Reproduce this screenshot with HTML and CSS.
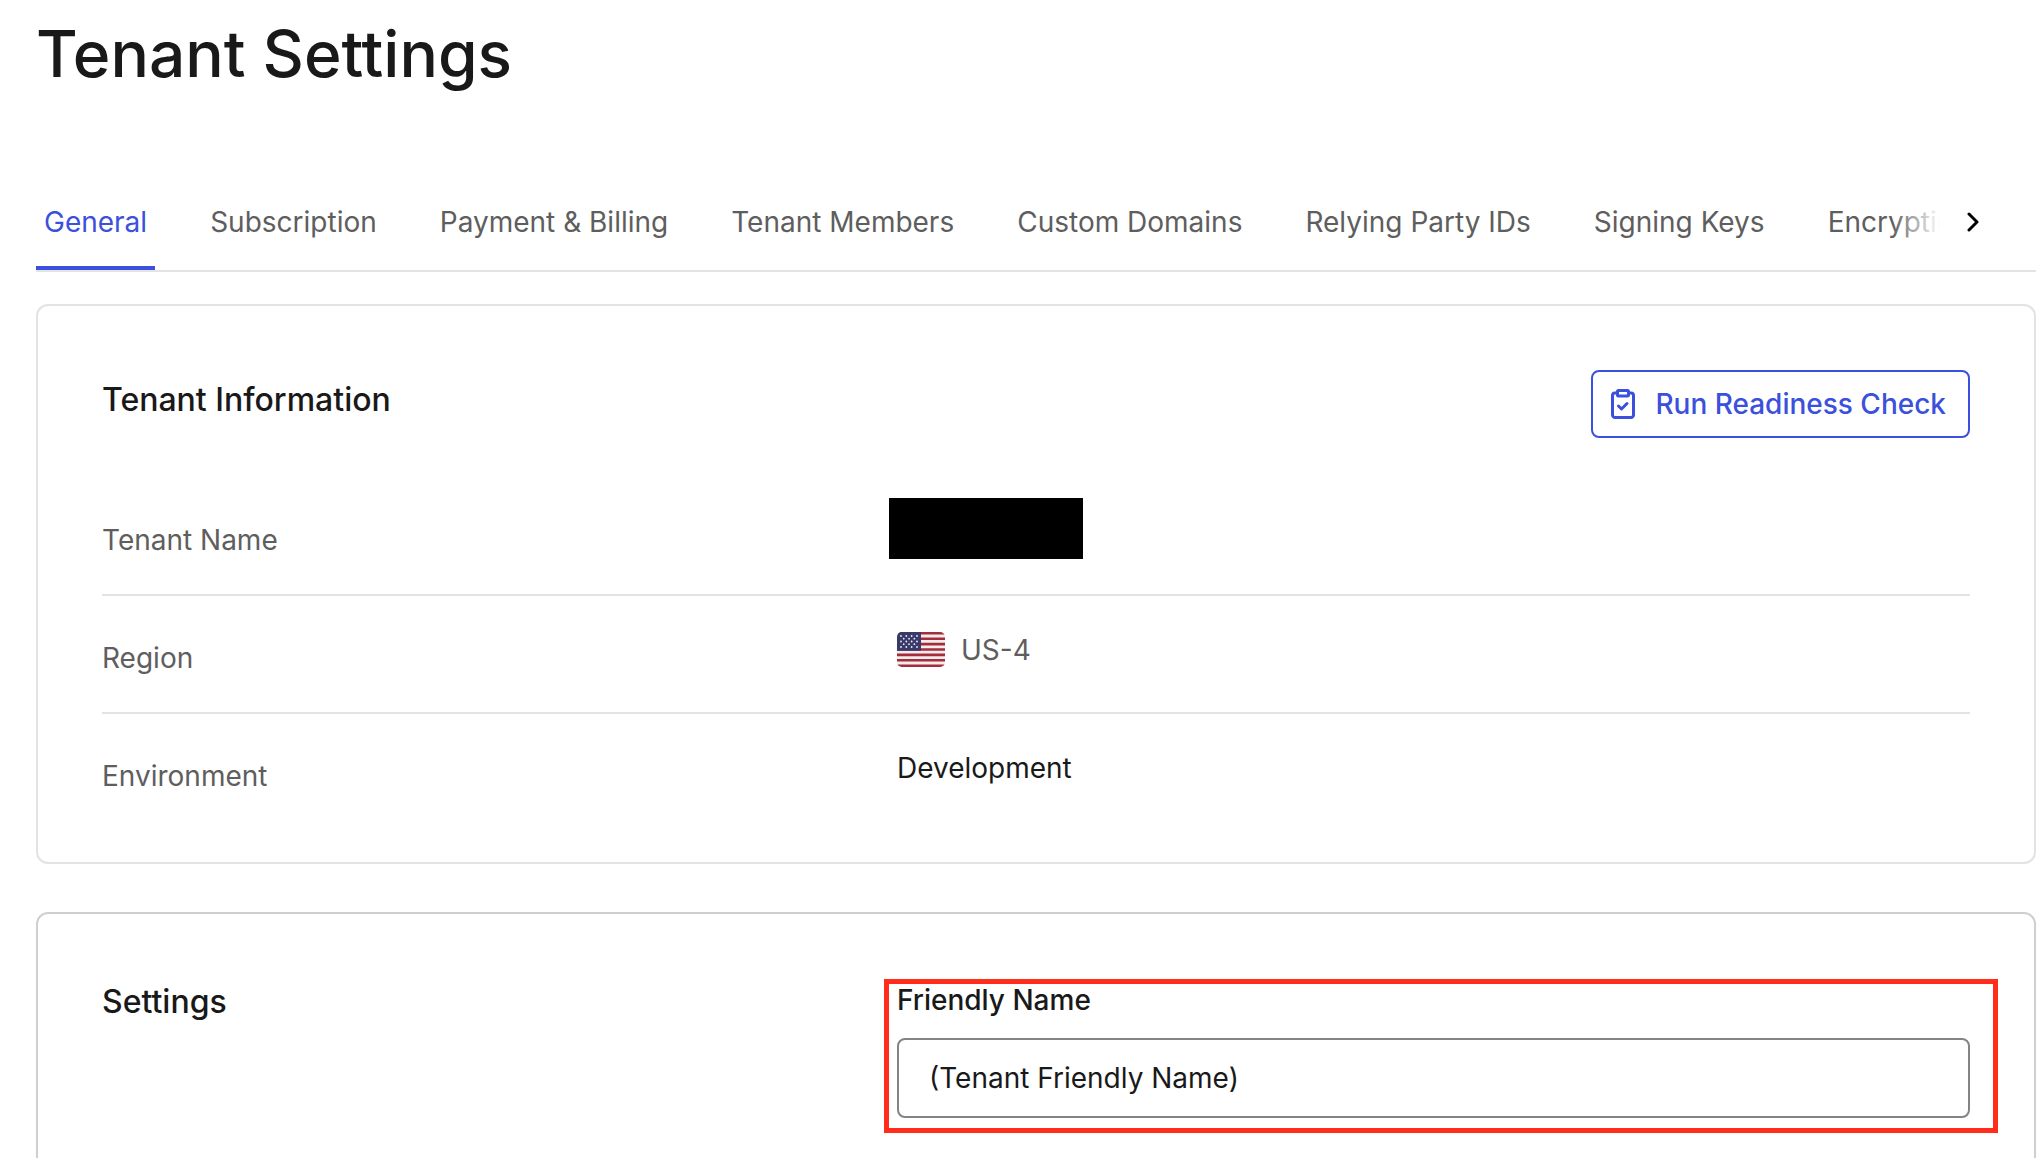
FILE: index.html
```html
<!DOCTYPE html>
<html lang="en">
<head>
  <meta charset="UTF-8">
  <meta name="viewport" content="width=device-width, initial-scale=1.0">
  <title>Tenant Settings</title>
  <link rel="stylesheet" href="styles.css">
</head>
<body>
  <header>
    <h1>Tenant Settings</h1>
  </header>

  <nav class="tabs" aria-label="Tenant settings">
    <div class="tab-list">
      <a class="tab active" href="#general">General</a>
      <a class="tab" href="#subscription">Subscription</a>
      <a class="tab" href="#billing">Payment &amp; Billing</a>
      <a class="tab" href="#members">Tenant Members</a>
      <a class="tab" href="#domains">Custom Domains</a>
      <a class="tab" href="#relying">Relying Party IDs</a>
      <a class="tab" href="#signing">Signing Keys</a>
      <a class="tab" href="#encryption">Encryption Keys</a>
    </div>
    <button class="tab-next" type="button" aria-label="Next tabs">
      <svg width="12" height="20" viewBox="0 0 12 20" fill="none" stroke="currentColor" stroke-width="3" stroke-linecap="round" stroke-linejoin="round">
        <path d="M2 2l8 8-8 8"/>
      </svg>
    </button>
  </nav>

  <main>
    <section class="card">
      <div class="card-header">
        <h2>Tenant Information</h2>
        <button class="check-button" type="button">
          <svg width="24" height="30" viewBox="0 0 24 30" fill="none" stroke="currentColor" stroke-width="3" stroke-linecap="round" stroke-linejoin="round">
            <path d="M6 4H4a2.500 2.500 0 0 0-2.500 2.500v19.500a2.500 2.500 0 0 0 2.500 2.500h16a2.500 2.500 0 0 0 2.500-2.500V6.500A2.500 2.500 0 0 0 20 4h-2"/>
            <rect x="6.500" y="1.500" width="11" height="5.500" rx="1"/>
            <path d="M7.500 17l3 3 5.500-5.500"/>
          </svg>
          Run Readiness Check
        </button>
      </div>

      <dl class="info">
        <div class="row">
          <dt>Tenant Name</dt>
          <dd><span class="redacted"></span></dd>
        </div>
        <div class="row">
          <dt>Region</dt>
          <dd class="region">
            <svg class="flag" width="48" height="35" viewBox="0 0 48 35" aria-hidden="true">
              <clipPath id="flagShape"><rect width="48" height="35" rx="5"/></clipPath>
              <g clip-path="url(#flagShape)">
                <rect width="48" height="35" fill="#eeeeee"/>
                <path stroke="#a92a39" stroke-width="2.600" d="M0 1.300h48M0 6.700h48M0 12.100h48M0 17.500h48M0 22.900h48M0 28.300h48M0 33.700h48"/>
                <rect width="24" height="18.800" fill="#39396b"/>
                <g stroke="#eeeeee" stroke-width="1.800" stroke-linecap="round" stroke-dasharray="0 5.330">
                  <path d="M4 4h17M4 9.500h17M4 15h17"/>
                  <path d="M6.700 6.700h12M6.700 12.200h12"/>
                </g>
              </g>
            </svg>
            US-4
          </dd>
        </div>
        <div class="row">
          <dt>Environment</dt>
          <dd class="dark">Development</dd>
        </div>
      </dl>
    </section>

    <section class="card settings">
      <h2>Settings</h2>
      <div class="field highlighted">
        <label for="friendlyName">Friendly Name</label>
        <input type="text" id="friendlyName" name="friendlyName" value="(Tenant Friendly Name)">
      </div>
    </section>
  </main>
</body>
</html>
```

FILE: styles.css
```css
* {
  box-sizing: border-box;
}

body {
  height: 100vh;
  margin: 0;
  padding: 16px 8px 0 36px;
  overflow: hidden;
  background: #fff;
  color: #191919;
  font-family: Inter, sans-serif;
  font-size: 28px;
  line-height: 40px;
}

h1, h2, dl, dd {
  margin: 0;
}

h1 {
  font-size: 64px;
  font-weight: 500;
  line-height: 76px;
}

h2 {
  font-size: 32px;
  font-weight: 500;
  line-height: 48px;
}

button, input {
  font: inherit;
}

/* Tabs */
.tabs {
  display: flex;
  margin-top: 86px;
  border-bottom: 2px solid #e3e3e3;
}

.tab-list {
  position: relative;
  display: flex;
  flex: 1;
  gap: 47px;
  min-width: 0;
  overflow: hidden;
}

/* fades out the last visible tab */
.tab-list::after {
  content: "";
  position: absolute;
  top: 0;
  right: 0;
  bottom: 0;
  width: 48px;
  background: linear-gradient(to right, rgba(255, 255, 255, 0), #fff);
}

.tab {
  padding: 24px 8px;
  border-bottom: 4px solid transparent;
  color: #5e5e5e;
  text-decoration: none;
  white-space: nowrap;
}

.tab.active {
  border-bottom-color: #3b50dc;
  color: #3b50dc;
}

.tab-next {
  width: 96px;
  padding: 0 27px 4px;
  border: none;
  background: none;
  color: #000;
  text-align: left;
  cursor: pointer;
}

/* Cards */
.card {
  margin-top: 32px;
  padding: 64px;
  border: 2px solid #e3e3e3;
  border-radius: 12px;
}

.card-header {
  display: flex;
  justify-content: space-between;
  align-items: flex-start;
}

.card-header h2 {
  padding-top: 6px;
}

.check-button {
  display: flex;
  align-items: center;
  gap: 20px;
  height: 68px;
  padding: 0 22px 0 18px;
  border: 2px solid #3b50dc;
  border-radius: 8px;
  background: #fff;
  color: #3b50dc;
  font-weight: 500;
  cursor: pointer;
}

.info {
  margin-top: 40px;
}

.row, .settings {
  display: grid;
  grid-template-columns: repeat(12, 1fr);
  column-gap: 40px;
}

.row {
  padding: 34px 0;
  border-bottom: 2px solid #e3e3e3;
  color: #5e5e5e;
}

.row:last-child {
  padding-bottom: 2px;
  border-bottom: none;
}

dt, .settings h2 {
  grid-column: span 5;
}

dt {
  padding-top: 8px;
}

dd, .field {
  position: relative;
  grid-column: span 7;
}

.dark {
  color: #191919;
}

.redacted {
  position: absolute;
  top: -14px;
  left: -8px;
  width: 194px;
  height: 61px;
  background: #000;
}

.region {
  display: flex;
  align-items: flex-start;
  gap: 16px;
}

.flag {
  margin-top: 2px;
}

/* Settings form */
.settings {
  margin-top: 48px;
  border-color: #cfcfcf;
}

.field {
  display: flex;
  flex-direction: column;
  gap: 16px;
}

.field label {
  font-weight: 500;
  line-height: 44px;
}

.field input {
  width: 100%;
  height: 80px;
  padding: 0 30px;
  border: 2px solid #848484;
  border-radius: 8px;
  background: #fff;
  color: #191919;
}

.highlighted::after {
  content: "";
  position: absolute;
  top: 1px;
  right: -28px;
  bottom: -15px;
  left: -13px;
  border: 5px solid #ff2d1a;
  pointer-events: none;
}
```
